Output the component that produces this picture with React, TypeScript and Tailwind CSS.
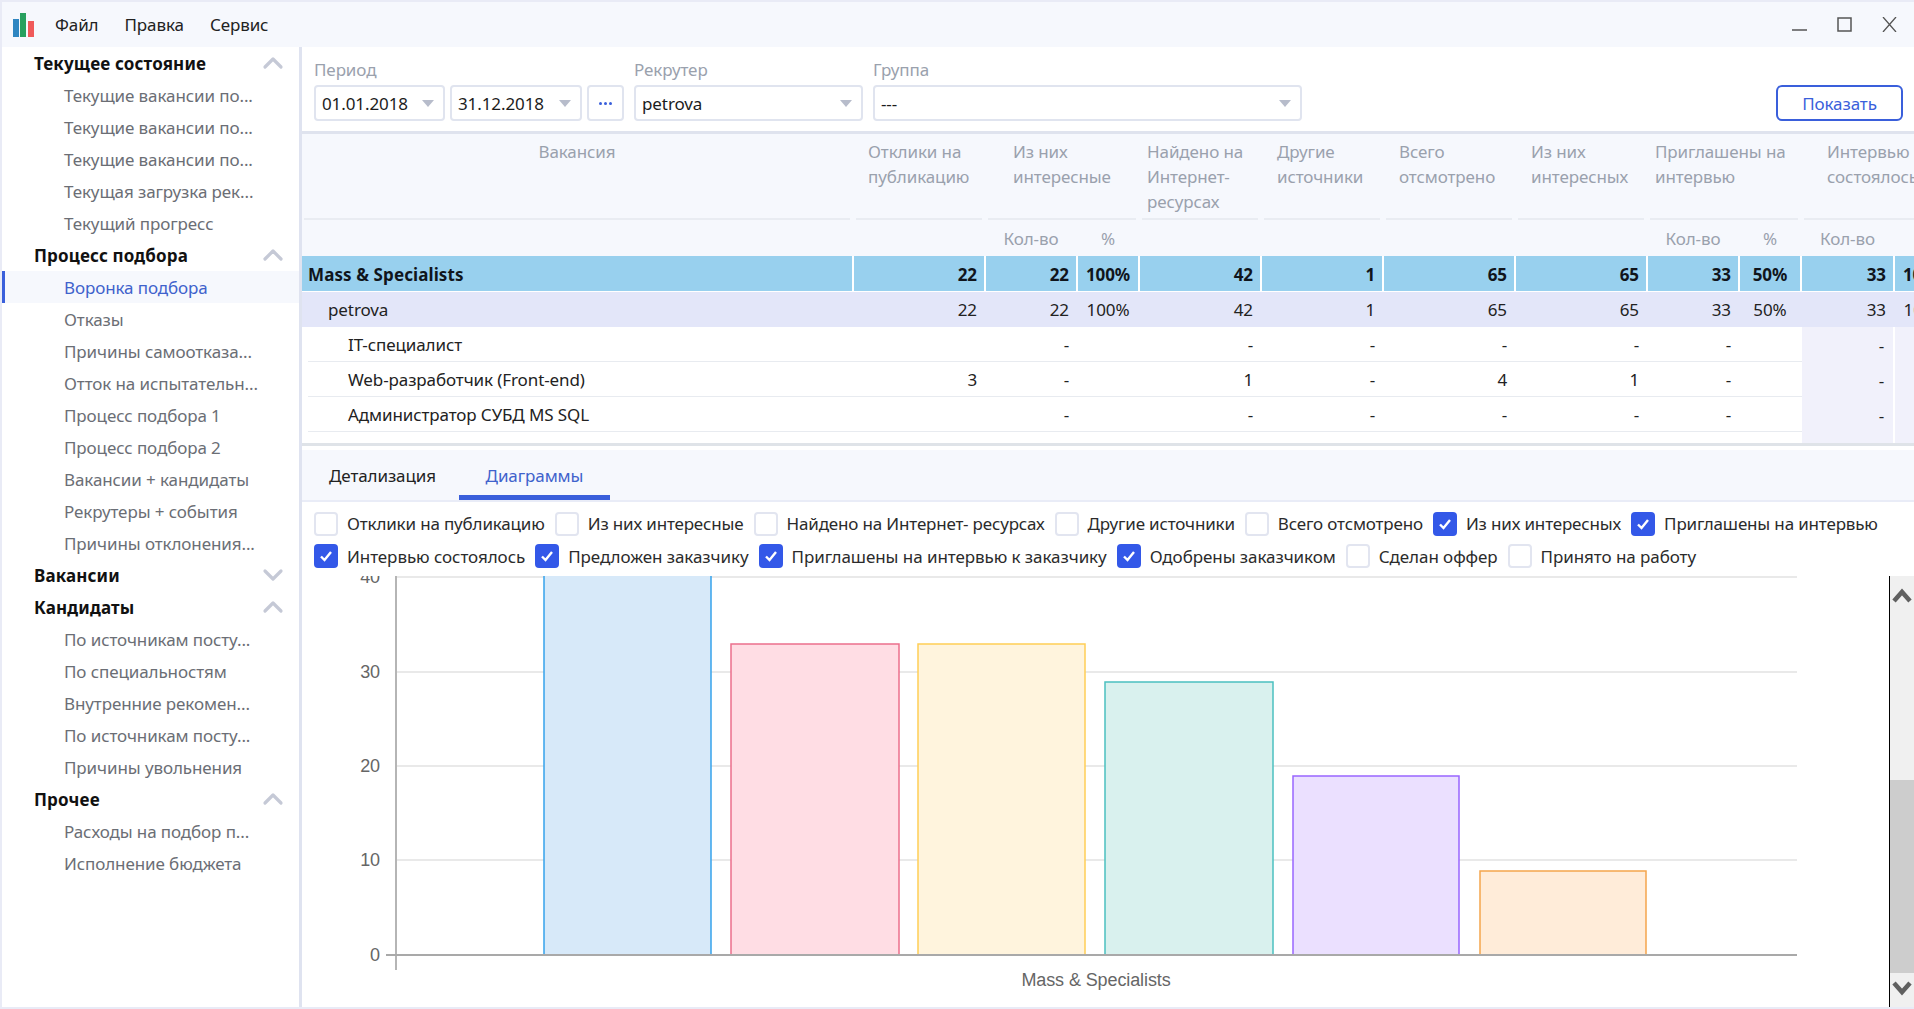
import { ChevronDown, ChevronUp } from "lucide-react";

const sidebar = [
  { title: "Текущее состояние", open: true, items: ["Текущие вакансии по...", "Текущие вакансии по...", "Текущие вакансии по...", "Текущая загрузка рек...", "Текущий прогресс"] },
  { title: "Процесс подбора", open: true, items: ["Воронка подбора", "Отказы", "Причины самоотказа...", "Отток на испытательн...", "Процесс подбора 1", "Процесс подбора 2", "Вакансии + кандидаты", "Рекрутеры + события", "Причины отклонения..."] },
  { title: "Вакансии", open: false, items: [] },
  { title: "Кандидаты", open: true, items: ["По источникам посту...", "По специальностям", "Внутренние рекомен...", "По источникам посту...", "Причины увольнения"] },
  { title: "Прочее", open: true, items: ["Расходы на подбор п...", "Исполнение бюджета"] },
];

const headGrid = "grid gap-x-[2px] grid-cols-[550px_130px_90px_60px_120px_120px_130px_130px_90px_60px_91px_60px]";
const rowGrid = "grid ml-[6px] grid-cols-[546px_132px_92px_62px_122px_122px_132px_132px_92px_62px_93px_60px]";

const topValues = ["22", "22", "100%", "42", "1", "65", "65", "33", "50%", "33", "100%"];
const detailRows = [
  { name: "IT-специалист", values: ["", "-", "", "-", "-", "-", "-", "-", "", "-", ""] },
  { name: "Web-разработчик (Front-end)", values: ["3", "-", "", "1", "-", "4", "1", "-", "", "-", ""] },
  { name: "Администратор СУБД MS SQL", values: ["", "-", "", "-", "-", "-", "-", "-", "", "-", ""] },
];

const checksTop = [
  { label: "Отклики на публикацию", on: false },
  { label: "Из них интересные", on: false },
  { label: "Найдено на Интернет- ресурсах", on: false },
  { label: "Другие источники", on: false },
  { label: "Всего отсмотрено", on: false },
  { label: "Из них интересных", on: true },
  { label: "Приглашены на интервью", on: true },
];
const checksBottom = [
  { label: "Интервью состоялось", on: true },
  { label: "Предложен заказчику", on: true },
  { label: "Приглашены на интервью к заказчику", on: true },
  { label: "Одобрены заказчиком", on: true },
  { label: "Сделан оффер", on: false },
  { label: "Принято на работу", on: false },
];

const bars = [
  { x: 544, w: 167, top: 570, fill: "#d7e9f9", stroke: "#36a2eb" },
  { x: 731, w: 168, top: 644, fill: "#ffdde4", stroke: "#ec6f8c" },
  { x: 918, w: 167, top: 644, fill: "#fff4dd", stroke: "#ffce56" },
  { x: 1105, w: 168, top: 682, fill: "#d9f1ee", stroke: "#4bc0c0" },
  { x: 1293, w: 166, top: 776, fill: "#ebe0ff", stroke: "#9966ff" },
  { x: 1480, w: 166, top: 871, fill: "#ffecd9", stroke: "#f5a54c" },
];

const Caret = () => (
  <svg width="12" height="7" viewBox="0 0 12 7" className="shrink-0">
    <polygon points="0,0 12,0 6,7" fill="#b7bccb" />
  </svg>
);

const Field = ({ text, className }: { text: string; className: string }) => (
  <div className={`h-[36px] flex items-center justify-between pl-[6px] pr-[9px] border-2 border-[#e0e4ef] rounded-[4px] text-[#1c1c1c] ${className}`}>
    <span className="pt-[2px]">{text}</span>
    <Caret />
  </div>
);

const Check = ({ label, on }: { label: string; on: boolean }) => (
  <div className="flex items-center gap-[9px]">
    {on ? (
      <div className="w-[24px] h-[24px] rounded-[4px] bg-[#3358e8] flex items-center justify-center">
        <svg width="14" height="12" viewBox="0 0 14 12" fill="none">
          <path d="M2 6.5 L5.5 10 L12 2" stroke="white" strokeWidth="2.4" />
        </svg>
      </div>
    ) : (
      <div className="w-[24px] h-[24px] rounded-[4px] border-2 border-[#e2e5f0] bg-white" />
    )}
    <span className="text-[#2b2b2b] whitespace-nowrap">{label}</span>
  </div>
);

const Sidebar = () => (
  <div className="w-[302px] shrink-0 border-r-[3px] border-[#dfe3f0] overflow-hidden">
    {sidebar.map((group) => (
      <div key={group.title}>
        <div className="h-[32px] flex items-center justify-between pl-[34px] pr-[10px]">
          <span className="pt-[2px] font-bold tracking-[0.15px] text-[#111]">{group.title}</span>
          {group.open ? (
            <ChevronUp size={32} strokeWidth={2.4} className="text-[#c5c9d6]" />
          ) : (
            <ChevronDown size={32} strokeWidth={2.4} className="text-[#c5c9d6]" />
          )}
        </div>
        {group.items.map((item, i) =>
          item === "Воронка подбора" ? (
            <div key={i} className="h-[32px] flex items-center pl-[59px] pt-[2px] bg-[#f6f8fd] border-l-[5px] border-[#3a5fdb] text-[#3f62cc]">
              {item}
            </div>
          ) : (
            <div key={i} className="h-[32px] flex items-center pl-[64px] pt-[2px] text-[#6b6e75]">
              {item}
            </div>
          ),
        )}
      </div>
    ))}
  </div>
);

const DataTable = () => (
  <div className="overflow-hidden">
    <div className="bg-[#f6f8fd] text-[#9aa1ad] leading-[25px]">
      <div className={`${headGrid} h-[86px]`}>
        <div className="mx-[2px] border-b-2 border-[#e9ecf2] pt-[5px] text-center">Вакансия</div>
        <div className="mx-[2px] border-b-2 border-[#e9ecf2] pt-[5px] pl-[12px]">Отклики на<br />публикацию</div>
        <div className="col-span-2 mx-[2px] border-b-2 border-[#e9ecf2] pt-[5px] pl-[25px]">Из них<br />интересные</div>
        <div className="mx-[2px] border-b-2 border-[#e9ecf2] pt-[5px] pl-[5px]">Найдено на<br />Интернет-<br />ресурсах</div>
        <div className="mx-[2px] border-b-2 border-[#e9ecf2] pt-[5px] pl-[13px]">Другие<br />источники</div>
        <div className="mx-[2px] border-b-2 border-[#e9ecf2] pt-[5px] pl-[13px]">Всего<br />отсмотрено</div>
        <div className="mx-[2px] border-b-2 border-[#e9ecf2] pt-[5px] pl-[13px]">Из них<br />интересных</div>
        <div className="col-span-2 mx-[2px] border-b-2 border-[#e9ecf2] pt-[5px] pl-[5px]">Приглашены на<br />интервью</div>
        <div className="col-span-2 mx-[2px] border-b-2 border-[#e9ecf2] pt-[5px] pl-[23px] whitespace-nowrap">Интервью<br />состоялось</div>
      </div>
      <div className={`${headGrid} h-[36px] items-center text-center`}>
        <div className="col-span-2" />
        <div>Кол-во</div>
        <div>%</div>
        <div className="col-span-4" />
        <div>Кол-во</div>
        <div>%</div>
        <div>Кол-во</div>
      </div>
    </div>

    <div className={`${headGrid} h-[35px] font-bold text-[#10151c]`}>
      <div className="bg-[#98d0ee] flex items-center pl-[6px] pt-[2px] tracking-[0.1px]">Mass &amp; Specialists</div>
      {topValues.map((v, i) => (
        <div key={i} className={`bg-[#98d0ee] flex items-center pt-[2px] ${v.includes("%") ? "justify-center" : "justify-end pr-[7px]"}`}>
          {v}
        </div>
      ))}
    </div>

    <div className={`${headGrid} mt-px h-[35px] gap-x-0 bg-[#e3e6f9] text-[#222]`}>
      <div className="flex items-center pl-[26px]">petrova</div>
      {topValues.map((v, i) => (
        <div key={i} className={`flex items-center ${v.includes("%") ? "justify-center" : "justify-end pr-[7px]"}`}>
          {v}
        </div>
      ))}
    </div>

    {detailRows.map((row) => (
      <div key={row.name} className={`${rowGrid} h-[35px] text-[#222]`}>
        <div className="flex items-center pl-[40px] pt-[2px] border-b border-[#e8ebf0]">{row.name}</div>
        {row.values.map((v, i) => (
          <div
            key={i}
            className={
              i < 9
                ? "flex items-center justify-end pr-[9px] pt-[2px] border-b border-[#e8ebf0]"
                : "flex items-center justify-end pr-[9px] pt-[2px] bg-[#f1f1fb] border-r-2 border-white"
            }
          >
            {v}
          </div>
        ))}
      </div>
    ))}
    <div className={`${rowGrid} h-[11px]`}>
      <div className="col-span-10" />
      <div className="bg-[#f1f1fb] border-r-2 border-white" />
      <div className="bg-[#f1f1fb]" />
    </div>
  </div>
);

const Chart = () => (
  <svg viewBox="302 576 1587 431" className="flex-1 min-w-0 h-full">
    {[577, 672, 766, 860].map((y) => (
      <line key={y} x1={396} x2={1797} y1={y} y2={y} stroke="#e9e9e9" strokeWidth="2" />
    ))}
    {bars.map((b) => (
      <rect key={b.x} x={b.x} y={b.top} width={b.w} height={955 - b.top} fill={b.fill} stroke={b.stroke} strokeWidth="1.5" />
    ))}
    <line x1={396} x2={396} y1={576} y2={970} stroke="#b5b5b5" strokeWidth="2" />
    <line x1={386} x2={1797} y1={955} y2={955} stroke="#a9a9a9" strokeWidth="2" />
    {[
      { y: 577, t: "40" },
      { y: 672, t: "30" },
      { y: 766, t: "20" },
      { y: 860, t: "10" },
      { y: 955, t: "0" },
    ].map((tick) => (
      <text key={tick.t} x={380} y={tick.y + 6} textAnchor="end" fontSize="18" fill="#666" fontFamily="'Liberation Sans', sans-serif">
        {tick.t}
      </text>
    ))}
    <text x={1096} y={986} textAnchor="middle" fontSize="18" fill="#666" fontFamily="'Liberation Sans', sans-serif">
      Mass &amp; Specialists
    </text>
  </svg>
);

export default function App() {
  return (
    <div className="w-[1914px] h-[1009px] flex flex-col overflow-hidden bg-white border-t-2 border-b-2 border-l-2 border-[#e9ebf6] text-[17px] tracking-[-0.1px] font-['Noto_Sans','Open_Sans',sans-serif]">
      <div className="h-[45px] shrink-0 -ml-[2px] bg-[#f6f8fd] flex items-center">
        <svg width="34" height="36" viewBox="0 0 34 36" className="ml-[10px] shrink-0">
          <rect x="3" y="12" width="6" height="18" fill="#2f86c1" />
          <rect x="10" y="6" width="6" height="24" fill="#28a05f" />
          <rect x="18" y="14" width="6" height="16" fill="#f05a5a" />
        </svg>
        <div className="flex gap-[26px] ml-[11px] text-[#222]">
          <span>Файл</span>
          <span>Правка</span>
          <span>Сервис</span>
        </div>
        <div className="ml-auto flex items-center gap-[30px] pr-[17px]">
          <svg width="15" height="15" viewBox="0 0 15 15"><line x1="0" x2="15" y1="13" y2="13" stroke="#555" strokeWidth="1.5" /></svg>
          <svg width="15" height="15" viewBox="0 0 15 15" fill="none"><rect x="1" y="1" width="13" height="13" stroke="#555" strokeWidth="1.5" /></svg>
          <svg width="15" height="15" viewBox="0 0 15 15" fill="none"><path d="M1 0 L14 15 M14 0 L1 15" stroke="#555" strokeWidth="1.3" /></svg>
        </div>
      </div>

      <div className="flex flex-1 min-h-0 -ml-[2px]">
        <Sidebar />
        <div className="flex-1 min-w-0 flex flex-col">
          <div className="h-[84px] shrink-0 flex items-end gap-[10px] pl-[12px] pr-[11px] pb-[10px] text-[#1c1c1c]">
            <div className="flex flex-col">
              <span className="text-[#9aa1ad] leading-[26px] mb-[2px]">Период</span>
              <div className="flex gap-[5px]">
                <Field text="01.01.2018" className="w-[131px]" />
                <Field text="31.12.2018" className="w-[132px]" />
                <div className="w-[37px] h-[36px] flex items-center justify-center gap-[2px] border-2 border-[#e0e4ef] rounded-[4px]">
                  <div className="w-[3px] h-[3px] rounded-full bg-[#3a5fdb]" />
                  <div className="w-[3px] h-[3px] rounded-full bg-[#3a5fdb]" />
                  <div className="w-[3px] h-[3px] rounded-full bg-[#3a5fdb]" />
                </div>
              </div>
            </div>
            <div className="flex flex-col">
              <span className="text-[#9aa1ad] leading-[26px] mb-[2px]">Рекрутер</span>
              <Field text="petrova" className="w-[229px]" />
            </div>
            <div className="flex flex-col">
              <span className="text-[#9aa1ad] leading-[26px] mb-[2px]">Группа</span>
              <Field text="---" className="w-[429px]" />
            </div>
            <div className="ml-auto w-[127px] h-[36px] flex items-center justify-center border-2 border-[#3a5fdb] rounded-[6px] pt-[2px] text-[#3a5fdb]">Показать</div>
          </div>
          <div className="h-[3px] shrink-0 bg-[#dfe3ee]" />

          <DataTable />
          <div className="h-[3px] shrink-0 bg-[#dfe3e8]" />

          <div className="h-[50px] shrink-0 mt-[4px] bg-[#f6f8fd] flex">
            <div className="w-[157px] flex items-center pl-[27px] pt-[2px] text-[#222]">Детализация</div>
            <div className="w-[151px] flex items-center justify-center pt-[7px] border-b-[5px] border-[#3a5fdb] text-[#3f62cc]">Диаграммы</div>
          </div>
          <div className="h-[2px] shrink-0 bg-[#e9ecf7]" />

          <div className="h-[74px] shrink-0 pl-[12px] pt-[9px] flex flex-col gap-[7px]">
            <div className="flex gap-[10px] tracking-[-0.16px]">
              {checksTop.map((c) => <Check key={c.label} label={c.label} on={c.on} />)}
            </div>
            <div className="flex gap-[10px] tracking-[-0.07px]">
              {checksBottom.map((c) => <Check key={c.label} label={c.label} on={c.on} />)}
            </div>
          </div>

          <div className="flex-1 min-h-0 flex">
            <Chart />
            <div className="w-[25px] shrink-0 border-l border-black bg-[#f0f0f0] flex flex-col">
              <svg width="24" height="34" viewBox="0 0 24 34" fill="none" className="shrink-0">
                <path d="M4 25 L12 16 L20 25" stroke="#606060" strokeWidth="4.5" />
              </svg>
              <div className="flex-1 mt-[170px] bg-[#cdcdcd]" />
              <svg width="24" height="34" viewBox="0 0 24 34" fill="none" className="shrink-0">
                <path d="M4 10 L12 19 L20 10" stroke="#606060" strokeWidth="4.5" />
              </svg>
            </div>
          </div>
        </div>
      </div>
    </div>
  );
}
